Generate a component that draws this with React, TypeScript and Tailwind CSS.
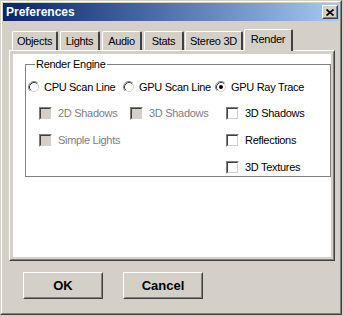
import React from "react";

const tabs = [
  { label: "Objects", w: "w-[46px]", ml: "ml-[9px]" },
  { label: "Lights", w: "w-[40px]", ml: "ml-[2px]" },
  { label: "Audio", w: "w-[40px]", ml: "ml-[2px]" },
  { label: "Stats", w: "w-[40px]", ml: "ml-[2px]" },
  { label: "Stereo 3D", w: "w-[58px]", ml: "ml-[1px]" },
];

function Radio({ checked }: { checked?: boolean }) {
  return (
    <svg width="12" height="12" viewBox="0 0 12 12" className="shrink-0">
      <circle cx="6" cy="6" r="5.5" fill="#fff" />
      <path d="M2.11 9.89 A5.5 5.5 0 0 1 9.89 2.11" fill="none" stroke="#808080" />
      <path d="M9.89 2.11 A5.5 5.5 0 0 1 2.11 9.89" fill="none" stroke="#fff" />
      <path d="M2.82 9.18 A4.5 4.5 0 0 1 9.18 2.82" fill="none" stroke="#404040" />
      <path d="M9.18 2.82 A4.5 4.5 0 0 1 2.82 9.18" fill="none" stroke="#d4d0c8" />
      {checked && <circle cx="6" cy="6" r="2" fill="#000" />}
    </svg>
  );
}

function Check({ disabled }: { disabled?: boolean }) {
  return (
    <span className="block w-[13px] h-[13px] shrink-0 border border-t-[#808080] border-l-[#808080] border-r-white border-b-white">
      <span
        className={`block w-full h-full border border-t-[#404040] border-l-[#404040] border-r-[#d4d0c8] border-b-[#d4d0c8] ${
          disabled ? "bg-[#d4d0c8]" : "bg-white"
        }`}
      />
    </span>
  );
}

function CheckItem({ label, disabled }: { label: string; disabled?: boolean }) {
  return (
    <div className="flex items-center gap-[6px] h-[14px]">
      <Check disabled={disabled} />
      <span className={disabled ? "text-[#808080]" : "text-black"}>{label}</span>
    </div>
  );
}

function Button({ label }: { label: string }) {
  return (
    <div className="w-[80px] h-[27px] border border-t-white border-l-white border-r-[#404040] border-b-[#404040]">
      <div className="w-full h-full flex items-center justify-center border border-t-transparent border-l-transparent border-r-[#808080] border-b-[#808080] font-bold text-[13px]">
        {label}
      </div>
    </div>
  );
}

export default function App() {
  return (
    <div className="w-[344px] h-[317px] bg-[#d4d0c8] font-['Liberation_Sans',Arial,sans-serif] text-[11px] leading-[13px] text-black">
      <div className="w-[342px] h-[315px] border border-t-[#d4d0c8] border-l-[#d4d0c8] border-r-[#404040] border-b-[#404040]">
        <div className="h-full flex flex-col p-px border border-t-white border-l-white border-r-[#808080] border-b-[#808080]">
          {/* title bar */}
          <div className="h-[18px] flex items-center justify-between pl-[3px] pr-[1px] bg-linear-to-r from-[#0a246a] to-[#a6caf0]">
            <span className="text-white font-bold text-[12px]">Preferences</span>
            <div className="w-[16px] h-[14px] border border-t-white border-l-white border-r-[#404040] border-b-[#404040] bg-[#d4d0c8]">
              <div className="w-full h-full flex items-center justify-center border border-t-transparent border-l-transparent border-r-[#808080] border-b-[#808080]">
                <svg width="8" height="7" viewBox="0 0 8 7">
                  <path d="M0.5 0.5 L7.5 6.5 M7.5 0.5 L0.5 6.5" stroke="#000" strokeWidth="1.7" />
                </svg>
              </div>
            </div>
          </div>

          {/* tabs */}
          <div className="mt-[8px] h-[21px] flex items-end tracking-[-0.3px]">
            {tabs.map((t) => (
              <div
                key={t.label}
                className={`${t.w} ${t.ml} h-[19px] flex items-center justify-center rounded-t-[2px] border-t border-l border-r-2 border-t-white border-l-white border-r-[#404040] bg-[#d4d0c8]`}
              >
                {t.label}
              </div>
            ))}
            <div className="relative z-10 w-[49px] ml-[1px] h-[22px] -mb-px pb-[3px] flex items-center justify-center rounded-t-[2px] border-t border-l border-r-2 border-t-white border-l-white border-r-[#404040] bg-[#d4d0c8]">
              Render
            </div>
          </div>

          {/* panel */}
          <div className="ml-[6px] w-[326px] h-[211px] border border-t-white border-l-white border-r-[#404040] border-b-[#404040]">
            <div className="w-full h-full p-[2px] bg-[#d4d0c8] border border-t-transparent border-l-transparent border-r-[#808080] border-b-[#808080]">
              <div className="w-full h-full bg-white pt-[4px] pl-[12px] tracking-[-0.3px]">
                <fieldset className="w-[306px] border border-[#808080] pl-[2px] pt-[9px] pb-[2px]">
                  <legend className="ml-[7px] px-[1px] leading-[13px]">Render Engine</legend>
                  <div className="flex items-center h-[14px]">
                    <div className="w-[95px] flex items-center gap-[4px]">
                      <Radio />
                      <span>CPU Scan Line</span>
                    </div>
                    <div className="w-[92px] flex items-center gap-[4px]">
                      <Radio />
                      <span>GPU Scan Line</span>
                    </div>
                    <div className="flex items-center gap-[4px]">
                      <Radio checked />
                      <span>GPU Ray Trace</span>
                    </div>
                  </div>
                  <div className="mt-[12px] pl-[11px] grid grid-cols-[91px_96px_1fr] gap-y-[13px]">
                    <CheckItem label="2D Shadows" disabled />
                    <CheckItem label="3D Shadows" disabled />
                    <CheckItem label="3D Shadows" />
                    <div className="col-span-2">
                      <CheckItem label="Simple Lights" disabled />
                    </div>
                    <CheckItem label="Reflections" />
                    <div className="col-start-3">
                      <CheckItem label="3D Textures" />
                    </div>
                  </div>
                </fieldset>
              </div>
            </div>
          </div>

          {/* buttons */}
          <div className="mt-[11px] flex gap-[20px] pl-[20px]">
            <Button label="OK" />
            <Button label="Cancel" />
          </div>
        </div>
      </div>
    </div>
  );
}
